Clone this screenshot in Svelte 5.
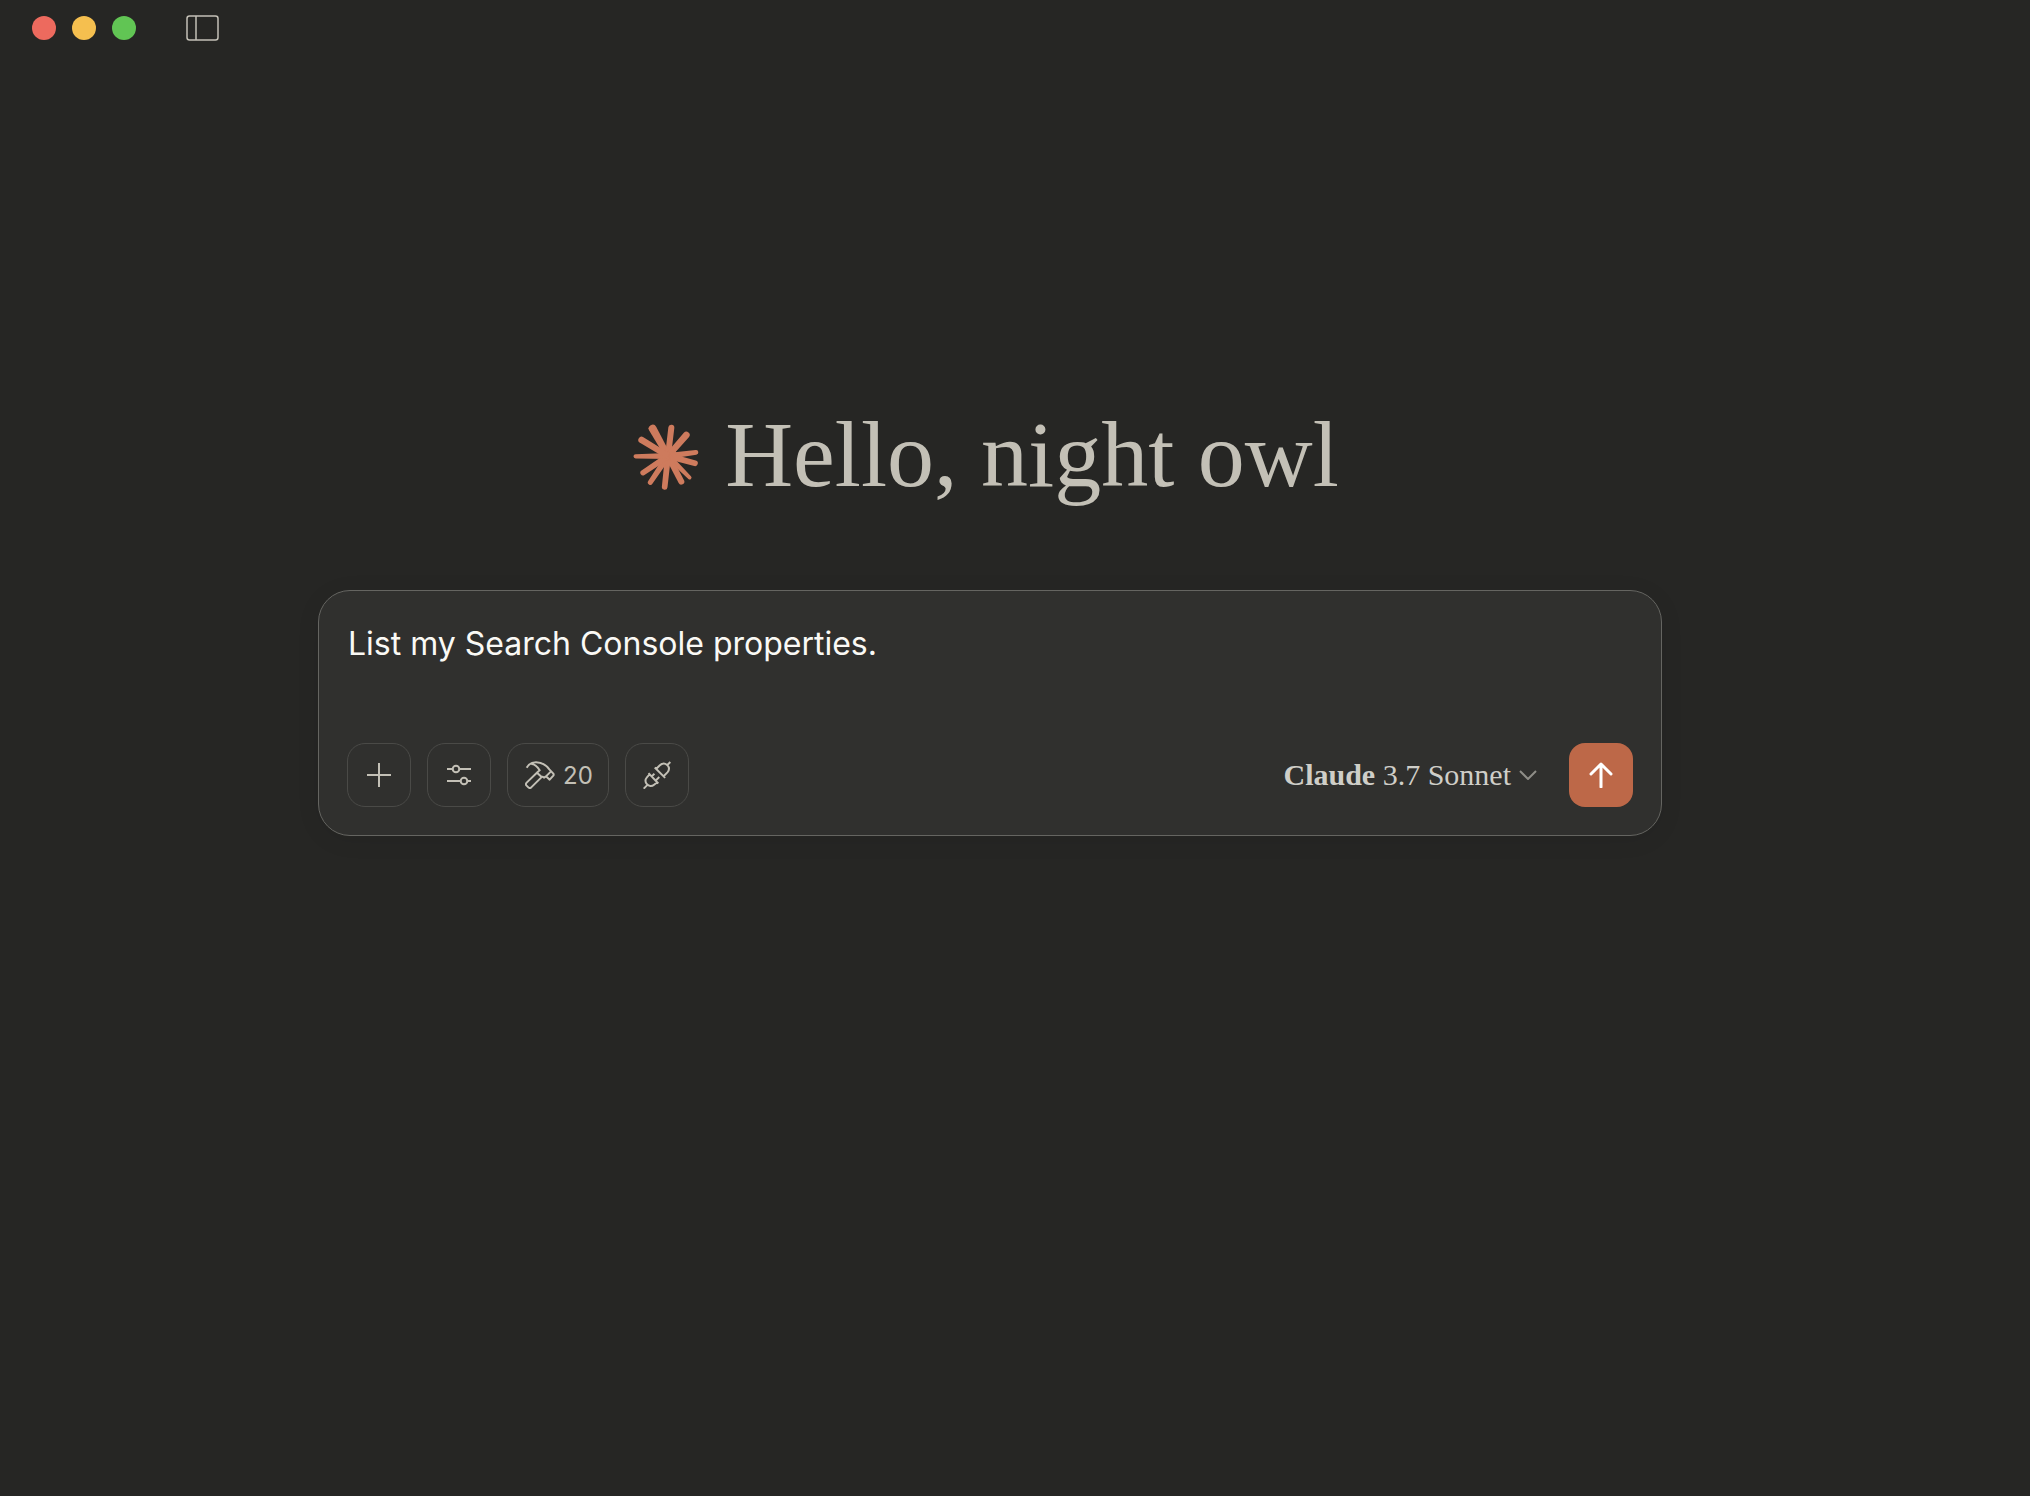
<script>
  let prompt = $state('List my Search Console properties.');
  const lights = ['close', 'minimize', 'zoom'];
  // Tip position and tip radius of each ray of the starburst.
  const rays = [
    [56, 11, 12], [112, 8, 9], [157, 30, 10], [186, 82, 7], [183, 115, 8.5], [167, 158, 5.5],
    [142, 170, 9], [92, 186, 8.5], [49, 172, 7.5], [27, 143, 8], [5, 94, 6.5], [23, 45, 10]
  ];
  const cx = 102;
  const cy = 93;
  function ray([x, y, r]) {
    const d = Math.hypot(x - cx, y - cy);
    const nx = -(y - cy) / d;
    const ny = (x - cx) / d;
    const b = 9;
    return `M${cx + nx * b} ${cy + ny * b}L${x + nx * r} ${y + ny * r}A${r} ${r} 0 0 0 ${x - nx * r} ${y - ny * r}L${cx - nx * b} ${cy - ny * b}Z`;
  }
</script>

<div class="window">
  <header>
    <div class="lights">
      {#each lights as light}
        <button class="light {light}" aria-label={light}></button>
      {/each}
    </div>
    <button class="sidebar" aria-label="Toggle sidebar">
      <svg width="34" height="26" viewBox="0 0 34 26">
        <rect x="2" y="1" width="31" height="24" rx="2.5" />
        <path d="M11 1v24" />
      </svg>
    </button>
  </header>

  <main>
    <h1>
      <svg class="burst" width="66" height="66" viewBox="-3 -3 198 198">
        <circle cx={cx} cy={cy} r="27" />
        {#each rays as r}<path d={ray(r)} />{/each}
      </svg>
      <span>Hello, night owl</span>
    </h1>

    <form class="card" onsubmit={(e) => e.preventDefault()}>
      <textarea rows="1" aria-label="Message" spellcheck="false" bind:value={prompt}></textarea>
      <div class="tools">
        <button type="button" class="tool" aria-label="Add content">
          <svg width="24" height="24" viewBox="0 0 24 24"><path d="M12 0v24M0 12h24" /></svg>
        </button>
        <button type="button" class="tool" aria-label="Settings">
          <svg width="24" height="24" viewBox="0 0 24 24">
            <path d="M0 6h5.500M12.500 6H24M0 18h13.500M20.500 18H24" />
            <circle cx="9" cy="6" r="3.300" /><circle cx="17" cy="18" r="3.300" />
          </svg>
        </button>
        <button type="button" class="tool count" aria-label="20 tools available">
          <svg class="fine" width="30" height="28" viewBox="77 73 90 84">
            <path d="M82 93C88 82 97 77 110 77C128 77 141 86 150 98L162 111Q164 114 162 117L151 129L140 119L134 123Q130 118 126 122L95 153Q91 156 87 152L81 146Q78 142 82 138L115 106L121 101C113 88 103 82 96 82M155 104L140 119M113 108L127 121" />
          </svg>
          <span>20</span>
        </button>
        <button type="button" class="tool" aria-label="Connectors">
          <svg class="fine" width="28" height="28" viewBox="428 73 86 86">
            <path d="M430 158L441 147M445 110L475 142M448 114L440 123C434 130 435 138 440 144C446 151 455 152 462 146L472 138M454 121L463 112M466 134L478 122M512 76L502 86M464 93L496 125M469 97L479 87C486 80 495 79 502 85C509 92 509 101 503 108L492 119" />
          </svg>
        </button>
        <button type="button" class="model">
          <span><b>Claude</b> 3.7 Sonnet</span>
          <svg width="18" height="10" viewBox="0 0 18 10"><path d="M1 1l8 8 8-8" /></svg>
        </button>
        <button type="submit" class="send" aria-label="Send message">
          <svg width="24" height="26" viewBox="0 0 24 26"><path d="M12 25V2M2 12L12 2l10 10" /></svg>
        </button>
      </div>
    </form>
  </main>
</div>

<style>
  :global(body) {
    margin: 0;
    background: #262624;
  }
  .window {
    min-height: 100vh;
    box-sizing: border-box;
    font-family: Inter, sans-serif;
    color: #c3c0b6;
  }
  button {
    padding: 0;
    border: 0;
    background: none;
    color: inherit;
    font: inherit;
    display: flex;
    align-items: center;
    justify-content: center;
  }
  svg {
    display: block;
    flex: none;
    fill: none;
    stroke: currentColor;
    stroke-width: 2;
  }
  header {
    display: flex;
    align-items: center;
    gap: 49px;
    height: 56px;
    padding-left: 32px;
  }
  .lights {
    display: flex;
    gap: 16px;
  }
  .light {
    width: 24px;
    height: 24px;
    border-radius: 50%;
  }
  .close { background: #ed6a5e; }
  .minimize { background: #f5bf4f; }
  .zoom { background: #61c554; }
  .sidebar svg {
    stroke-width: 1.5;
  }
  main {
    padding: 340px 82px 0 32px;
  }
  h1 {
    display: flex;
    align-items: center;
    justify-content: center;
    gap: 26px;
    margin: 0 0 78px;
    padding-right: 8px;
    font: 400 94px/116px "Liberation Serif", serif;
  }
  .burst {
    margin-top: 6px;
    fill: #ce7b5d;
    stroke: none;
  }
  .card {
    box-sizing: border-box;
    max-width: 1344px;
    margin: 0 auto;
    padding: 31px 28px 28px;
    border: 1px solid #656561;
    border-radius: 32px;
    background: #30302e;
    box-shadow: 0 4px 24px rgba(0, 0, 0, 0.07);
  }
  textarea {
    display: block;
    box-sizing: border-box;
    width: 100%;
    height: 80px;
    margin-bottom: 41px;
    padding: 0 1px;
    border: 0;
    outline: 0;
    resize: none;
    background: none;
    color: #faf9f5;
    font: 400 32px/44px Inter, sans-serif;
  }
  .tools {
    display: flex;
    align-items: center;
    gap: 16px;
  }
  .tool {
    box-sizing: border-box;
    min-width: 64px;
    height: 64px;
    border: 1px solid #4a4a47;
    border-radius: 18px;
  }
  .fine {
    stroke-width: 6;
    stroke-linejoin: round;
  }
  .count {
    gap: 8px;
    padding: 0 15px 0 17px;
    font-size: 24px;
  }
  .model {
    gap: 8px;
    margin-left: auto;
    margin-right: 16px;
    color: #cfcec8;
    font: 400 30px/40px "Liberation Serif", serif;
  }
  .model svg {
    color: #8f8e88;
  }
  .model b {
    font-weight: 700;
  }
  .send {
    width: 64px;
    height: 64px;
    border-radius: 16px;
    background: #bd6848;
    color: #fff;
  }
  .send svg {
    stroke-width: 3;
    stroke-linecap: round;
    stroke-linejoin: round;
  }
</style>
